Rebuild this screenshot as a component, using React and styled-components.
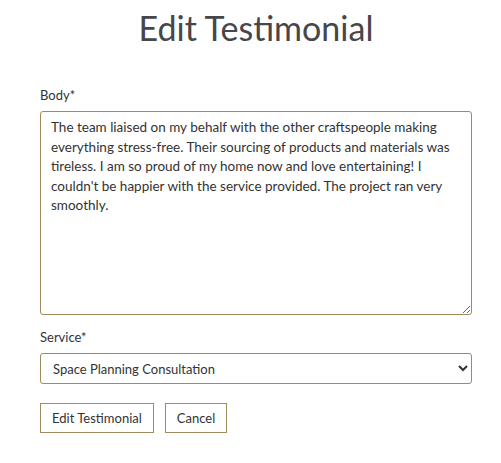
import React from "react";
import styled, { createGlobalStyle } from "styled-components";

const Global = createGlobalStyle`
  html, body { margin: 0; padding: 0; background: #fff; }
  body { font-family: Lato, "Open Sans", sans-serif; color: #333; }
`;

const Page = styled.main`
  width: 432px;
  padding: 0 29px 0 40px;
`;

const Title = styled.h1`
  margin: 0;
  padding-top: 8px;
  text-align: center;
  font-family: Lato, sans-serif;
  font-weight: 400;
  font-size: 34px;
  line-height: 39px;
  color: #46464b;
`;

const Form = styled.form`
  display: flex;
  flex-direction: column;
  margin-top: 40px;
`;

const Field = styled.div`
  display: flex;
  flex-direction: column;
  gap: 8px;
  margin-bottom: ${(p) => p.$mb || 0}px;
`;

const Label = styled.label`
  font-size: 13px;
  line-height: 16px;
  color: #333;
`;

const TextArea = styled.textarea`
  box-sizing: border-box;
  width: 100%;
  height: 204px;
  padding: 6px 10px;
  border: 1px solid #a08a5e;
  border-radius: 3px;
  font-family: Lato, sans-serif;
  font-size: 13.5px;
  line-height: 19.5px;
  color: #333;
  resize: vertical;
  outline: none;
`;

const Select = styled.select`
  box-sizing: border-box;
  width: 100%;
  height: 31px;
  padding: 0 8px;
  border: 1px solid #a08a5e;
  border-radius: 3px;
  background: #fff;
  font-family: Lato, sans-serif;
  font-size: 13px;
  color: #333;
  outline: none;
`;

const Actions = styled.div`
  display: flex;
  gap: 11px;
  margin-top: 19px;
`;

const Button = styled.button`
  box-sizing: border-box;
  height: 30px;
  padding: 0 11px;
  border: 1px solid #a08a5e;
  border-radius: 0;
  background: #fff;
  font-family: Lato, sans-serif;
  font-size: 13px;
  color: #333;
  cursor: pointer;
`;

const body =
  "The team liaised on my behalf with the other craftspeople making everything stress-free. Their sourcing of products and materials was tireless. I am so proud of my home now and love entertaining! I couldn't be happier with the service provided. The project ran very smoothly.";

export default function App() {
  return (
    <>
      <Global />
      <Page>
        <Title>Edit Testimonial</Title>
        <Form onSubmit={(e) => e.preventDefault()}>
          <Field $mb={14}>
            <Label htmlFor="body">Body*</Label>
            <TextArea id="body" defaultValue={body} />
          </Field>
          <Field>
            <Label htmlFor="service">Service*</Label>
            <Select id="service" defaultValue="space">
              <option value="space">Space Planning Consultation</option>
            </Select>
          </Field>
          <Actions>
            <Button type="submit">Edit Testimonial</Button>
            <Button type="button">Cancel</Button>
          </Actions>
        </Form>
      </Page>
    </>
  );
}
